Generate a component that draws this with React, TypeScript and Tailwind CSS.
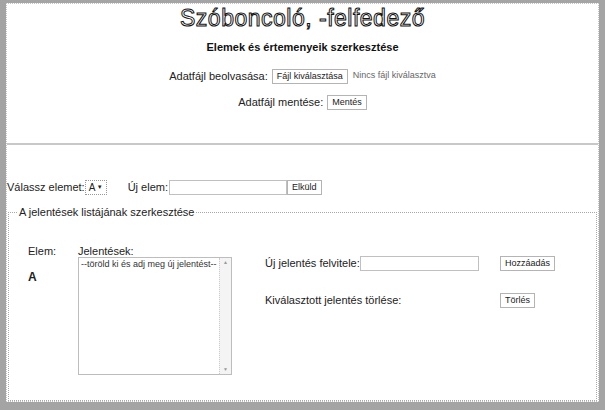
import React from "react";

const btn =
  "inline-flex h-[15px] items-center border border-[#b4b4b4] bg-white px-[4px] text-[9px] leading-none text-[#222]";

export default function App() {
  return (
    <div className="h-[410px] w-[605px] bg-white font-['Liberation_Sans',Arial,sans-serif] text-[11px] text-[#222]">
      <div className="flex h-full w-full flex-col border-t-[3px] border-r-[6px] border-b-[8px] border-l-[6px] border-[#a4a4a4]">
        <div className="flex h-full w-full flex-col border border-dotted border-[#c4c4c4]">
          {/* ==== Header ==== */}
          <div className="flex flex-col items-center">
            <h1 className="mt-[1px] text-[23px] leading-[26px] tracking-[0.5px] text-white [-webkit-text-stroke:1px_#111]">
              Szóboncoló, -felfedező
            </h1>
            <h2 className="mt-[9px] text-[11px] leading-[14px] font-bold text-[#111]">
              Elemek és értemenyeik szerkesztése
            </h2>
            <div className="mt-[14px] flex h-[16px] items-center">
              <span className="mr-[4px]">Adatfájl beolvasása:</span>
              <span className={btn + " text-[#8a8a8a]"}>Fájl kiválasztása</span>
              <span className="ml-[5px] text-[9px] text-[#666]">
                Nincs fájl kiválasztva
              </span>
            </div>
            <div className="mt-[10px] flex h-[16px] items-center">
              <span className="mr-[4px]">Adatfájl mentése:</span>
              <span className={btn}>Mentés</span>
            </div>
          </div>

          <div className="mt-[33px] border-t-2 border-[#c8c8c8]" />

          {/* ==== Element picker ==== */}
          <div className="mt-[35px] flex h-[15px] items-center">
            <span>Válassz elemet:</span>
            <span className="inline-flex h-[15px] w-[22px] items-center justify-between border border-dotted border-[#999] px-[3px] text-[10px]">
              A<span className="text-[6px]">▼</span>
            </span>
            <span className="ml-[21px]">Új elem:</span>
            <span className="ml-[1px] h-[15px] w-[118px] border border-[#c0c0c0]" />
            <span className={btn}>Elküld</span>
          </div>

          {/* ==== Meanings editor ==== */}
          <fieldset className="mt-[10px] mr-[1px] ml-[1px] flex-1 border border-dotted border-[#a8a8a8]">
            <legend className="ml-[9px] px-[1px] text-[11px] leading-[14px]">
              A jelentések listájának szerkesztése
            </legend>
            <div className="flex pt-[26px] pl-[19px]">
              <div className="flex w-[50px] flex-col">
                <span className="leading-[12px]">Elem:</span>
                <span className="mt-[11px] text-[12px] font-bold">A</span>
              </div>
              <div className="flex w-[154px] flex-col">
                <span className="leading-[12px]">Jelentések:</span>
                <div className="flex h-[118px] border border-[#bdbdbd]">
                  <div className="flex-1 px-[2px] pt-[1px] text-[9px] leading-[11px] text-[#333]">
                    --töröld ki és adj meg új jelentést--
                  </div>
                  <div className="flex w-[12px] flex-col justify-between border-l border-dotted border-[#ccc] bg-[#f4f4f4] py-[2px] text-center text-[5px] leading-none text-[#999]">
                    <span>▲</span>
                    <span>▼</span>
                  </div>
                </div>
              </div>
              <div className="ml-[33px] flex flex-col pt-[11px]">
                <div className="flex h-[15px] items-center">
                  <div className="flex w-[235px] items-center">
                    <span>Új jelentés felvitele:</span>
                    <span className="h-[15px] w-[119px] border border-[#c0c0c0]" />
                  </div>
                  <span className={btn}>Hozzáadás</span>
                </div>
                <div className="mt-[22px] flex h-[15px] items-center">
                  <div className="w-[235px]">Kiválasztott jelentés törlése:</div>
                  <span className={btn}>Törlés</span>
                </div>
              </div>
            </div>
          </fieldset>
        </div>
      </div>
    </div>
  );
}
